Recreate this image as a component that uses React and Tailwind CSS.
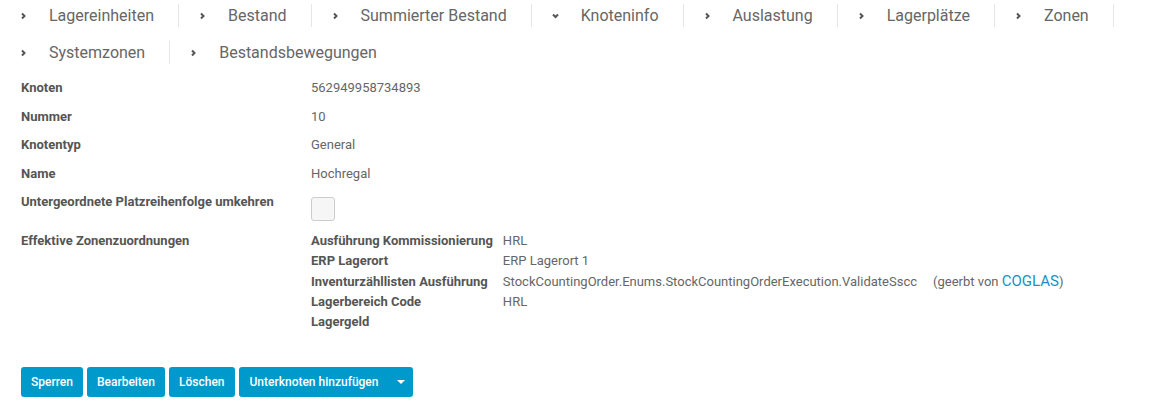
const tabs = [
  { label: "Lagereinheiten" },
  { label: "Bestand" },
  { label: "Summierter Bestand" },
  { label: "Knoteninfo", open: true },
  { label: "Auslastung" },
  { label: "Lagerplätze" },
  { label: "Zonen" },
  { label: "Systemzonen" },
  { label: "Bestandsbewegungen", last: true },
];

const zones = [
  ["Ausführung Kommissionierung", "HRL"],
  ["ERP Lagerort", "ERP Lagerort 1"],
  ["Inventurzähllisten Ausführung", "StockCountingOrder.Enums.StockCountingOrderExecution.ValidateSscc", true],
  ["Lagerbereich Code", "HRL"],
  ["Lagergeld", ""],
];

function Chevron({ open }) {
  return (
    <svg width="9" height="10" viewBox="0 0 9 10" className="shrink-0">
      {open ? (
        <path d="M2 3.5 L4.5 6 L7 3.5" fill="none" stroke="#555" strokeWidth="2" />
      ) : (
        <path d="M3 2.5 L5.5 5 L3 7.5" fill="none" stroke="#555" strokeWidth="2" />
      )}
    </svg>
  );
}

function Row({ label, children }) {
  return (
    <div className="flex py-[5px] leading-[18.57px]">
      <div className="w-[290px] shrink-0 font-bold text-[#555]">{label}</div>
      <div className="text-[#666]">{children}</div>
    </div>
  );
}

export default function App() {
  return (
    <div className="w-[1168px] h-[413px] bg-white text-[13px]" style={{ fontFamily: "Roboto, 'Liberation Sans', sans-serif" }}>
      {/* tab strip */}
      <div className="flex flex-wrap pt-[4px] gap-y-[14px]">
        {tabs.map((t) => (
          <div
            key={t.label}
            className={`flex items-center h-[23px] pl-[19px] pr-[24px] text-[16px] text-[#666] ${t.last ? "" : "border-r border-[#e6e6e6]"}`}
          >
            <Chevron open={t.open} />
            <span className="ml-[21px] leading-[22px]">{t.label}</span>
          </div>
        ))}
      </div>

      {/* details */}
      <div className="pl-[21px] pt-[10px]">
        <Row label="Knoten">562949958734893</Row>
        <Row label="Nummer">10</Row>
        <Row label="Knotentyp">General</Row>
        <Row label="Name">Hochregal</Row>
        <div className="flex py-[5px] leading-[18.57px]">
          <div className="w-[290px] shrink-0 font-bold text-[#555]">Untergeordnete Platzreihenfolge umkehren</div>
          <div className="mt-1 w-[24px] h-[24px] rounded-[3px] border border-[#ccc] bg-[#f6f6f6]" />
        </div>
        <div className="flex py-[5px]">
          <div className="w-[290px] shrink-0 font-bold text-[#555] leading-[18.57px] pt-[1px]">Effektive Zonenzuordnungen</div>
          <table className="border-collapse">
            <tbody>
              {zones.map(([k, v, inherited]) => (
                <tr key={k} className="leading-[20px]">
                  <td className="pr-[10px] font-bold text-[#555] align-middle">{k}</td>
                  <td className="text-[#666] align-middle">
                    {v}
                    {inherited && (
                      <span className="ml-[16px]">
                        (geerbt von <span className="text-[15px] text-[#1a8fc9]">COGLAS</span>)
                      </span>
                    )}
                  </td>
                </tr>
              ))}
            </tbody>
          </table>
        </div>

        {/* actions */}
        <div className="flex gap-[4px] mt-[30px] text-[12px]">
          {["Sperren", "Bearbeiten", "Löschen"].map((b) => (
            <button key={b} className="h-[30px] px-[10px] rounded-[3px] bg-[#0099cc] text-white font-medium">
              {b}
            </button>
          ))}
          <div className="flex h-[30px] rounded-[3px] bg-[#0099cc] text-white font-medium">
            <button className="pl-[11px] pr-[10px]">Unterknoten hinzufügen</button>
            <button className="w-[25px] flex items-center justify-center">
              <svg width="8" height="4" viewBox="0 0 8 4">
                <path d="M0 0 L8 0 L4 4 Z" fill="#fff" />
              </svg>
            </button>
          </div>
        </div>
      </div>
    </div>
  );
}
